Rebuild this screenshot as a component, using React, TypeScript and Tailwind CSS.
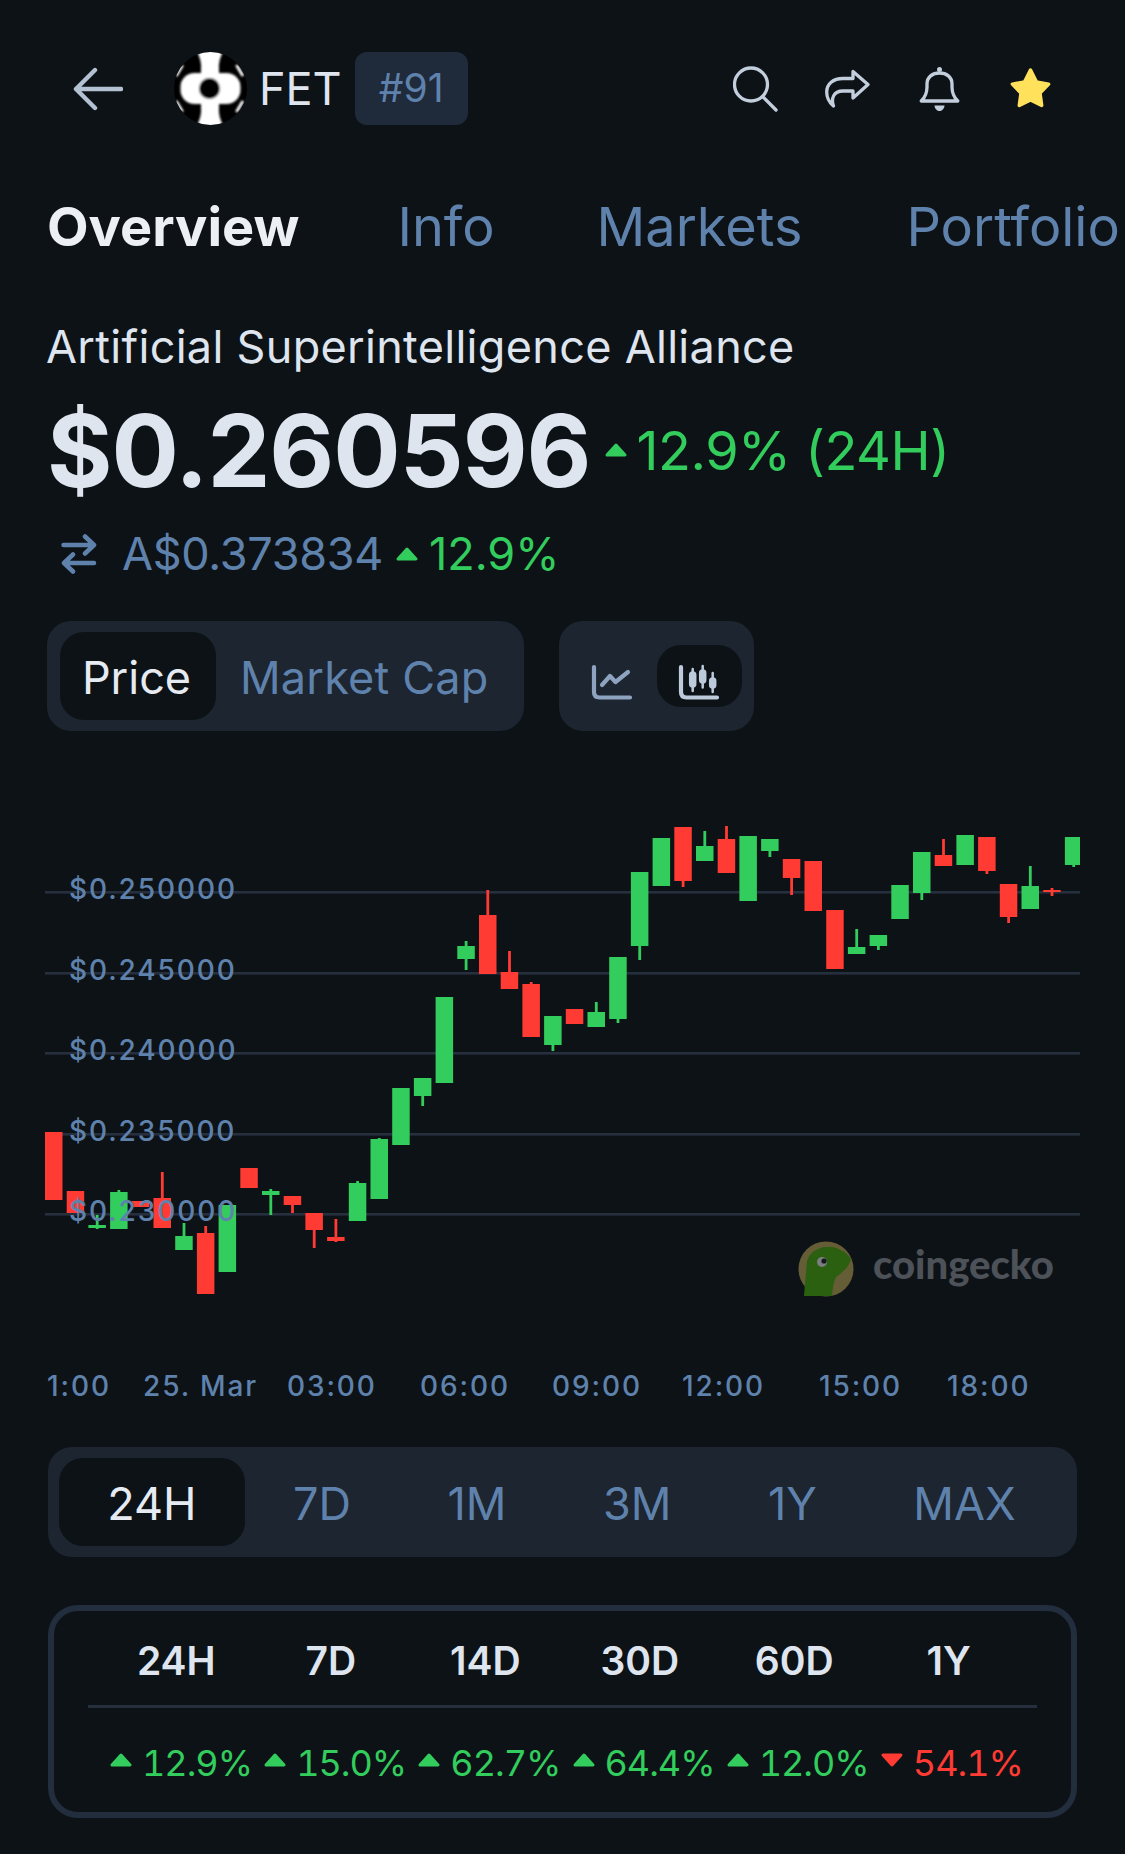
type Candle = [number, number, number, number, number];

const green = '#32cd5c';
const red = '#ff3b33';

// [wick top, body top, body bottom, wick bottom, 1 = up]
const candles: Candle[] = [
  [1132, 1132, 1200, 1200, 0],
  [1191, 1191, 1213, 1213, 0],
  [1215, 1225, 1228, 1229, 1],
  [1190, 1192, 1229, 1229, 1],
  [1201, 1201, 1207, 1207, 0],
  [1172, 1198, 1228, 1228, 0],
  [1223, 1236, 1250, 1250, 1],
  [1226, 1233, 1294, 1294, 0],
  [1205, 1205, 1272, 1272, 1],
  [1168, 1168, 1188, 1188, 0],
  [1189, 1191, 1195, 1215, 1],
  [1196, 1196, 1205, 1213, 0],
  [1213, 1213, 1230, 1248, 0],
  [1219, 1237, 1241, 1242, 0],
  [1181, 1183, 1221, 1221, 1],
  [1138, 1139, 1199, 1199, 1],
  [1088, 1088, 1145, 1145, 1],
  [1078, 1078, 1096, 1106, 1],
  [997, 997, 1083, 1083, 1],
  [941, 946, 959, 970, 1],
  [890, 915, 974, 974, 0],
  [951, 972, 989, 989, 0],
  [982, 984, 1037, 1037, 0],
  [1016, 1016, 1045, 1051, 1],
  [1009, 1009, 1024, 1024, 0],
  [1002, 1012, 1027, 1027, 1],
  [957, 957, 1019, 1023, 1],
  [872, 872, 946, 960, 1],
  [838, 838, 886, 886, 1],
  [827, 827, 881, 887, 0],
  [831, 846, 861, 861, 1],
  [826, 839, 873, 873, 0],
  [836, 836, 901, 901, 1],
  [839, 839, 851, 857, 1],
  [859, 859, 878, 895, 0],
  [861, 861, 911, 911, 0],
  [910, 910, 969, 969, 0],
  [929, 947, 954, 954, 1],
  [935, 935, 946, 950, 1],
  [885, 885, 919, 919, 1],
  [852, 852, 893, 900, 1],
  [839, 855, 866, 866, 0],
  [835, 835, 865, 865, 1],
  [837, 837, 871, 874, 0],
  [884, 884, 917, 923, 0],
  [866, 886, 909, 909, 1],
  [888, 890, 892, 896, 0],
  [837, 837, 865, 867, 1],
];

const gridLines = [892, 973, 1053, 1134, 1214];
const priceLabels = ['$0.250000', '$0.245000', '$0.240000', '$0.235000', '$0.230000'];
const timeLabels: [string, number][] = [
  ['1:00', 47],
  ['25. Mar', 143],
  ['03:00', 287],
  ['06:00', 420],
  ['09:00', 552],
  ['12:00', 682],
  ['15:00', 819],
  ['18:00', 947],
];

const ranges = ['24H', '7D', '1M', '3M', '1Y', 'MAX'];
const periods: [string, string, boolean][] = [
  ['24H', '12.9%', true],
  ['7D', '15.0%', true],
  ['14D', '62.7%', true],
  ['30D', '64.4%', true],
  ['60D', '12.0%', true],
  ['1Y', '54.1%', false],
];

function Caret({ up = true }: { up?: boolean }) {
  return (
    <svg width="22" height="14" viewBox="0 0 22 14" className="shrink-0">
      <path
        d={up ? 'M11 2 L20 12 H2 Z' : 'M2 2 H20 L11 12 Z'}
        fill={up ? green : red}
        stroke={up ? green : red}
        strokeWidth="3"
        strokeLinejoin="round"
      />
    </svg>
  );
}

function FetLogo() {
  return (
    <svg width="73" height="73" viewBox="0 0 73 73" className="shrink-0">
      <defs>
        <clipPath id="fet-clip">
          <circle cx="36.5" cy="36.5" r="36.5" />
        </clipPath>
        <filter id="fet-blur">
          <feGaussianBlur stdDeviation="1" />
        </filter>
      </defs>
      <g clipPath="url(#fet-clip)">
        <rect width="73" height="73" fill="#000" />
        <g filter="url(#fet-blur)" fill="#fff">
          <path d="M22 -2 H50 Q44 8 45 18 V55 Q44 65 50 75 H22 Q28 65 27 55 V18 Q28 8 22 -2 Z" />
          <rect x="6.5" y="21" width="60" height="31" rx="14" />
          <path d="M2 24 L8.5 13 M69 24 L62.5 13 M2 49 L8.5 60 M69 49 L62.5 60" stroke="#fff" strokeWidth="3" fill="none" />
          <circle cx="35.5" cy="36.5" r="10.5" fill="#000" />
        </g>
      </g>
    </svg>
  );
}

function Toolbar() {
  return (
    <div className="ml-auto flex items-center gap-[47px] pr-[73px]">
      <svg width="45" height="46" viewBox="0 0 45 46" fill="none" stroke="#c3cedd" strokeWidth="3.3" strokeLinecap="round">
        <circle cx="18" cy="18.5" r="16.5" />
        <path d="M30 31 L43 44" />
      </svg>
      <svg width="45" height="40" viewBox="0 0 45 40" fill="none" stroke="#c3cedd" strokeWidth="3.3" strokeLinejoin="round" strokeLinecap="round">
        <path d="M43 15.5 L28 2.5 V9.5 H18 C8 9.5 1.7 15 1.7 23 C1.7 29 5 34 8.5 37 C6 30 8 22 18 22 H28 V29 Z" />
      </svg>
      <svg width="45" height="46" viewBox="-2.5 0 45 46" fill="none" stroke="#c3cedd" strokeWidth="3.3" strokeLinejoin="round">
        <path d="M1.7 35 H38.3 C34 31 32.5 27 32.5 21 V18 C32.5 11 27 7 20 7 C13 7 7.5 11 7.5 18 V21 C7.5 27 6 31 1.7 35 Z" />
        <circle cx="20" cy="3.5" r="2.5" fill="#c3cedd" stroke="none" />
        <path d="M15 39.5 H25 C25 43 22 45 20 45 C18 45 15 43 15 39.5 Z" fill="#c3cedd" stroke="none" />
      </svg>
      <svg width="43" height="43" viewBox="0 0 42 43" fill="#ffe15c" stroke="#ffe15c" strokeWidth="3.5" strokeLinejoin="round">
        <path d="M21 3 L26.9 14.9 L39.1 17.1 L30.5 26.1 L32.2 38.4 L21 33 L9.8 38.4 L11.5 26.1 L2.9 17.1 L15.1 14.9 Z" />
      </svg>
    </div>
  );
}

function ChartTypeToggle() {
  return (
    <div className="flex h-[110px] w-[195px] items-center rounded-[24px] bg-[#1c2530] pl-[20px]">
      <svg width="60" height="60" viewBox="0 0 60 60" fill="none" stroke="#8ea3bf" strokeWidth="4.2" strokeLinecap="round" strokeLinejoin="round">
        <path d="M15 21 V46 Q15 51.5 20.5 51.5 H51" />
        <path d="M23 39 L31 30 L36.5 36 L49 26" />
      </svg>
      <div className="ml-[18px] flex h-[62px] w-[85px] items-center rounded-[24px] bg-[#0d1217] pl-[9px]">
        <svg width="60" height="60" viewBox="0 0 60 60" fill="none" stroke="#bccadc" strokeLinecap="round">
          <path d="M15 21 V46 Q15 51.5 20.5 51.5 H51" strokeWidth="4.2" />
          <path d="M26.7 23 V45 M36.7 20 V41.5 M46.7 27 V46" strokeWidth="2.5" />
          <path d="M26.7 29 V38 M36.7 27 V34 M46.7 35 V39" strokeWidth="7.5" />
        </svg>
      </div>
    </div>
  );
}

function CandleChart() {
  return (
    <svg width="1125" height="716" viewBox="0 731 1125 716" className="block">
      <defs>
        <clipPath id="plot-clip">
          <rect x="45" y="731" width="1035" height="716" />
        </clipPath>
      </defs>
      {gridLines.map((y) => (
        <rect key={y} x="45" y={y - 1} width="1035" height="2.6" fill="#262f3e" />
      ))}
      <g clipPath="url(#plot-clip)">
        {candles.map(([high, top, bottom, low, up], i) => {
          const x = 45 + i * 21.7;
          const color = up ? green : red;
          return (
            <g key={i} fill={color}>
              <rect x={x + 7.4} y={high} width="2.8" height={low - high} />
              <rect x={x} y={top} width="17.5" height={bottom - top} />
            </g>
          );
        })}
      </g>
      {priceLabels.map((label, i) => (
        <text key={label} x="69" y={gridLines[i] + 7} className="fill-[#5f82ad] text-[28px] font-medium tracking-[1.9px]">
          {label}
        </text>
      ))}
      {timeLabels.map(([label, x]) => (
        <text key={label} x={x} y="1396" className="fill-[#5f82ad] text-[28px] font-medium tracking-[1.9px]">
          {label}
        </text>
      ))}
      <g>
        <circle cx="826" cy="1269" r="27.5" fill="#655d36" />
        <path
          d="M804 1296 L807 1261 Q810 1250 824 1247 L833 1247 Q845 1250 851 1259 Q849 1268 836 1277 Q833 1283 832 1296 Z"
          fill="#2a600f"
        />
        <circle cx="822" cy="1262" r="5" fill="#7b7d80" />
        <circle cx="824" cy="1261" r="2.6" fill="#14181c" />
        <text x="873" y="1279" className="fill-[#4d5158] font-[Lato,sans-serif] text-[40px] font-black">
          coingecko
        </text>
      </g>
    </svg>
  );
}

export default function App() {
  return (
    <main className="h-[1854px] w-[1125px] overflow-hidden bg-[#0d1217] font-[Inter,sans-serif] text-[#dfe5ee]">
      <div className="h-[52px]" />
      <header className="flex h-[73px] items-center pl-[73px]">
        <svg width="50" height="44" viewBox="0 0 50 44" fill="none" stroke="#b4c1d3" strokeWidth="4.4" strokeLinecap="round" strokeLinejoin="round" className="mr-[51px]">
          <path d="M48 22 H3 M22 3 L3 22 L22 41" />
        </svg>
        <FetLogo />
        <span className="ml-[12px] text-[45px] leading-none">FET</span>
        <span className="ml-[13px] flex h-[73px] w-[113px] items-center justify-center rounded-[12px] bg-[#1f2b3b] text-[39px] text-[#5f82ad]">
          #91
        </span>
        <Toolbar />
      </header>

      <nav className="mt-[67px] flex gap-[102px] overflow-hidden whitespace-nowrap pl-[47px] text-[54px] leading-[70px] text-[#5f82ad]">
        <span className="-mr-[4px] font-bold text-[#ecf0f5]">Overview</span>
        <span>Info</span>
        <span>Markets</span>
        <span className="ml-[2px]">Portfolio</span>
      </nav>

      <p className="mt-[55px] pl-[46px] text-[45px] leading-[60px] tracking-[0.3px]">Artificial Superintelligence Alliance</p>

      <div className="mt-[19px] flex h-[110px] items-center pl-[47px]">
        <span className="text-[100px] font-bold leading-[110px] tracking-[-1px]">$0.260596</span>
        <span className="ml-[14px] mr-[10px] -mt-[3px]">
          <Caret />
        </span>
        <span className="text-[54px] leading-[60px] tracking-[-0.5px]" style={{ color: green }}>
          12.9% (24H)
        </span>
      </div>

      <div className="mt-[18px] flex h-[60px] items-center pl-[61px] text-[45px] leading-[60px] text-[#5f82ad]">
        <svg width="36" height="40" viewBox="0 0 36 40" fill="none" stroke="#5f82ad" strokeWidth="4.5" strokeLinecap="round" strokeLinejoin="round" className="mr-[25px]">
          <path d="M2.5 11 H33 M24 2.5 L33 11 L24 19.5 M33 29 H3 M12 20.5 L3 29 L12 37.5" />
        </svg>
        <span className="tracking-[-0.3px]">A$0.373834</span>
        <span className="ml-[13px] mr-[11px]">
          <Caret />
        </span>
        <span style={{ color: green }}>12.9%</span>
      </div>

      <div className="mt-[37px] flex gap-[35px] pl-[47px]">
        <div className="flex h-[110px] w-[477px] items-center rounded-[24px] bg-[#1c2530] pl-[13px]">
          <span className="flex h-[88px] w-[156px] items-center justify-center rounded-[24px] bg-[#0d1217] pt-[3px] pr-[3px] text-[45px] text-[#e6ebf2]">
            Price
          </span>
          <span className="ml-[24px] pt-[3px] text-[45px] tracking-[0.2px] text-[#5f82ad]">Market Cap</span>
        </div>
        <ChartTypeToggle />
      </div>

      <CandleChart />

      <div className="mx-[48px] flex h-[110px] items-center rounded-[24px] bg-[#1c2530] pl-[11px] pr-[13px] text-[45px] text-[#5f82ad]">
        {ranges.map((range, i) => (
          <span
            key={range}
            className={
              i === 0
                ? 'flex h-[88px] grow items-center justify-center rounded-[24px] bg-[#0d1217] px-[46px] pt-[3px] text-[#e6ebf2]'
                : 'flex h-[88px] grow items-center justify-center px-[46px] pt-[3px]'
            }
          >
            {range}
          </span>
        ))}
      </div>

      <section className="mx-[48px] mt-[48px] h-[213px] rounded-[30px] border-[6px] border-[#222d3d] px-[34px]">
        <div className="grid h-[97px] grid-cols-6 items-center border-b-[3px] border-[#262f3e] px-[11px] pt-[6px] text-center text-[39px] font-semibold">
          {periods.map(([period]) => (
            <span key={period}>{period}</span>
          ))}
        </div>
        <div className="grid h-[104px] grid-cols-6 items-center pl-[22px] pr-[2px] pt-[6px]">
          {periods.map(([period, value, up]) => (
            <span
              key={period}
              className="flex items-center gap-[10px] text-[36px] leading-none tabular-nums tracking-[-1px]"
              style={{ color: up ? green : red }}
            >
              <span className="-mt-[6px]">
                <Caret up={up} />
              </span>
              {value}
            </span>
          ))}
        </div>
      </section>
    </main>
  );
}
